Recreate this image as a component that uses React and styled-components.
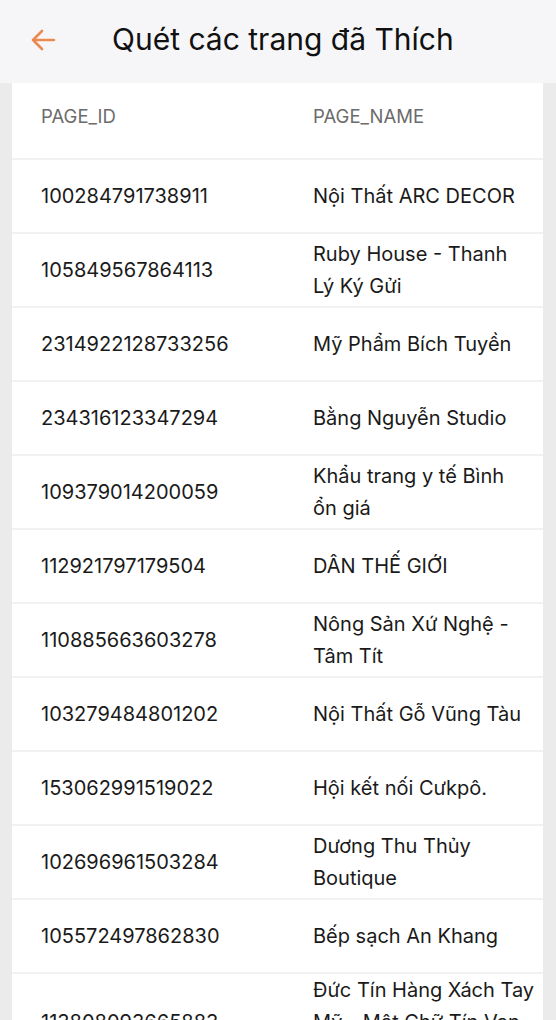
import React from "react"
import styled, { createGlobalStyle } from "styled-components"

const GlobalStyle = createGlobalStyle`
  html, body {
    margin: 0;
    padding: 0;
    background: #ebebeb;
    font-family: Inter, "Open Sans", sans-serif;
  }
`

const Screen = styled.div`
  width: 556px;
  height: 1020px;
  overflow: hidden;
  display: flex;
  flex-direction: column;
  background: #ebebeb;
`

const TopBar = styled.header`
  height: 83px;
  flex-shrink: 0;
  display: flex;
  align-items: center;
  background: #f6f6f8;
  padding-left: 29px;
  box-sizing: border-box;
`

const BackButton = styled.button`
  border: 0;
  background: none;
  padding: 0;
  width: 28px;
  height: 28px;
  display: flex;
  align-items: center;
  justify-content: center;
  margin-right: 55px;
  margin-bottom: 3px;
  cursor: pointer;
`

const Title = styled.h1`
  margin: 0 0 5px;
  font-size: 30px;
  font-weight: 400;
  color: #111;
`

const Card = styled.div`
  margin: 0 13px 0 12px;
  background: #fff;
  flex: 1;
`

const Row = styled.div`
  display: grid;
  grid-template-columns: 272px 224px;
  align-items: center;
  padding-left: 29px;
  min-height: ${p => (p.$head ? "77px" : "74px")};
  border-bottom: 2px solid #f1f1f1;
  padding-bottom: ${p => (p.$head ? "10px" : "0")};
  box-sizing: border-box;
`

const HeadCell = styled.div`
  font-size: 18.5px;
  color: #6b6b6b;
`

const Cell = styled.div`
  font-size: 20px;
  line-height: 32px;
  color: #1a1a1a;
  white-space: pre-line;
`

const pages = [
  ["100284791738911", "Nội Thất ARC DECOR"],
  ["105849567864113", "Ruby House - Thanh\nLý Ký Gửi"],
  ["2314922128733256", "Mỹ Phẩm Bích Tuyền"],
  ["234316123347294", "Bằng Nguyễn Studio"],
  ["109379014200059", "Khẩu trang y tế Bình\nổn giá"],
  ["112921797179504", "DÂN THẾ GIỚI"],
  ["110885663603278", "Nông Sản Xứ Nghệ -\nTâm Tít"],
  ["103279484801202", "Nội Thất Gỗ Vũng Tàu"],
  ["153062991519022", "Hội kết nối Cưkpô."],
  ["102696961503284", "Dương Thu Thủy\nBoutique"],
  ["105572497862830", "Bếp sạch An Khang"],
  ["113808093665883", "Đức Tín Hàng Xách Tay\nMỹ - Mật Chữ Tín Vạn Người Mua"],
]

const ArrowLeft = () => (
  <svg width="28" height="28" viewBox="0 0 28 28" fill="none">
    <path
      d="M25 14H4M13 5L4 14l9 9"
      stroke="#ea8a4f"
      strokeWidth="2.6"
      strokeLinecap="round"
      strokeLinejoin="round"
    />
  </svg>
)

const App = () => {
  return (
    <>
      <GlobalStyle />
      <Screen>
        <TopBar>
          <BackButton aria-label="back">
            <ArrowLeft />
          </BackButton>
          <Title>Quét các trang đã Thích</Title>
        </TopBar>
        <Card>
          <Row $head>
            <HeadCell>PAGE_ID</HeadCell>
            <HeadCell>PAGE_NAME</HeadCell>
          </Row>
          {pages.map(([id, name]) => (
            <Row key={id}>
              <Cell>{id}</Cell>
              <Cell>{name}</Cell>
            </Row>
          ))}
        </Card>
      </Screen>
    </>
  )
}

export default App
